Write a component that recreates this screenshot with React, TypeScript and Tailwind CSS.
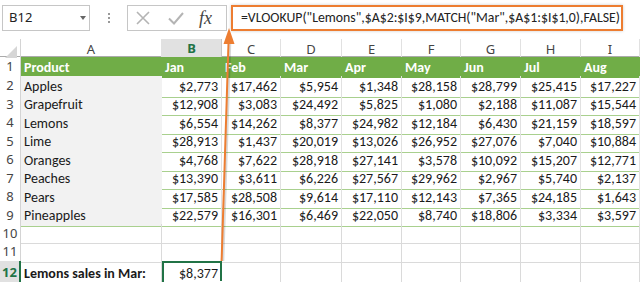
import React from "react";

const cols = ["A", "B", "C", "D", "E", "F", "G", "H", "I"];
const months = ["Jan", "Feb", "Mar", "Apr", "May", "Jun", "Jul", "Aug"];

const data: [string, string[]][] = [
  ["Apples", ["$2,773", "$17,462", "$5,954", "$1,348", "$28,158", "$28,799", "$25,415", "$17,227"]],
  ["Grapefruit", ["$12,908", "$3,083", "$24,492", "$5,825", "$1,080", "$2,188", "$11,087", "$15,544"]],
  ["Lemons", ["$6,554", "$14,262", "$8,377", "$24,982", "$12,184", "$6,430", "$21,159", "$18,597"]],
  ["Lime", ["$28,913", "$1,437", "$20,019", "$13,026", "$26,952", "$27,076", "$7,040", "$10,884"]],
  ["Oranges", ["$4,768", "$7,622", "$28,918", "$27,141", "$3,578", "$10,092", "$15,207", "$12,771"]],
  ["Peaches", ["$13,390", "$3,611", "$6,226", "$27,567", "$29,962", "$2,967", "$5,740", "$2,137"]],
  ["Pears", ["$17,585", "$28,508", "$9,614", "$17,110", "$12,143", "$7,365", "$24,185", "$1,643"]],
  ["Pineapples", ["$22,579", "$16,301", "$6,469", "$22,050", "$8,740", "$18,806", "$3,334", "$3,597"]],
];

const grid =
  "grid grid-cols-[21px_141px_60px_59px_61px_60px_59px_60px_60px_59px]";

function RowNum({ n }: { n: number }) {
  return (
    <div className="flex items-center justify-center border-r border-b border-[#d4d4d4] bg-white text-[13px] text-[#444] font-['Segoe_UI','Noto_Sans',sans-serif]">
      {n}
    </div>
  );
}

export default function App() {
  return (
    <div className="relative w-[640px] h-[282px] overflow-hidden bg-white font-['Carlito','Lato',sans-serif] text-[14px] text-[#1a1a1a]">
      {/* formula bar */}
      <div className="flex h-[39px] items-start pt-[5px] pl-[2px]">
        <div className="flex h-[26px] w-[88px] items-center justify-between border border-[#c6c6c6] pl-[6px] pr-[3px] text-[13px] text-[#222] font-['Segoe_UI','Noto_Sans',sans-serif]">
          <span>B12</span>
          <span className="h-0 w-0 border-x-[3.5px] border-t-[4px] border-x-transparent border-t-[#666]" />
        </div>
        <div className="flex h-[26px] w-[37px] flex-col items-center justify-center gap-[2px]">
          <span className="h-[2px] w-[2px] bg-[#999]" />
          <span className="h-[2px] w-[2px] bg-[#999]" />
          <span className="h-[2px] w-[2px] bg-[#999]" />
        </div>
        <div className="flex h-[26px] w-[100px] items-center border border-[#c6c6c6] pl-[6px]">
          <svg width="16" height="16" viewBox="0 0 16 16" className="ml-[1px]">
            <path d="M2 2 L14 14 M14 2 L2 14" stroke="#b4b4b4" strokeWidth="1.6" fill="none" />
          </svg>
          <svg width="18" height="16" viewBox="0 0 18 16" className="ml-[16px]">
            <path d="M2 8.5 L7 13.5 L16 3" stroke="#b4b4b4" strokeWidth="2" fill="none" />
          </svg>
          <span className="ml-[14px] font-['Liberation_Serif',serif] text-[18px] italic text-[#444]">
            fx
          </span>
        </div>
        <div className="ml-[4px] flex h-[26px] w-[392px] items-center border-2 border-[#ed7d31] pl-[8px] text-[13.8px] text-[#222] shadow-[0_0_3px_rgba(0,0,0,0.2)]">
          =VLOOKUP("Lemons",$A$2:$I$9,MATCH("Mar",$A$1:$I$1,0),FALSE)
        </div>
      </div>

      {/* column headers */}
      <div className={`${grid} h-[18px] border-b border-[#ababab] font-['Segoe_UI','Noto_Sans',sans-serif] text-[13px] text-[#444]`}>
        <div className="relative border-r border-[#d4d4d4]">
          <span className="absolute bottom-[3px] right-[3px] h-0 w-0 border-b-[12px] border-l-[12px] border-b-[#d6d6d6] border-l-transparent" />
        </div>
        {cols.map((c) => (
          <div
            key={c}
            className={
              c === "B"
                ? "flex items-center justify-center border-r border-b-2 border-r-[#c6c6c6] border-b-[#217346] bg-[#e1e1e1] font-bold text-[#217346]"
                : "flex items-center justify-center border-r border-[#e1e1e1]"
            }
          >
            {c}
          </div>
        ))}
      </div>

      {/* row 1 */}
      <div className={`${grid} h-[18.5px]`}>
        <RowNum n={1} />
        <div className="flex items-center bg-[#70ad47] pl-[3px] font-bold text-white">Product</div>
        {months.map((m) => (
          <div key={m} className="flex items-center bg-[#70ad47] pl-[3px] font-bold text-white">
            {m}
          </div>
        ))}
      </div>

      {data.map(([name, vals], i) => (
        <div key={name} className={`${grid} h-[18.5px]`}>
          <RowNum n={i + 2} />
          <div className="flex items-center border-b border-[#a9d08e] bg-[#f2f2f2] pl-[3px]">{name}</div>
          {vals.map((v, j) => (
            <div
              key={j}
              className="flex items-center justify-end border-r border-b border-r-[#e1e1e1] border-b-[#a9d08e] pr-[3px]"
            >
              {v}
            </div>
          ))}
        </div>
      ))}

      {[10, 11].map((n) => (
        <div key={n} className={`${grid} h-[18.5px]`}>
          <RowNum n={n} />
          {cols.map((c) => (
            <div key={c} className="border-r border-b border-[#dadada]" />
          ))}
        </div>
      ))}

      {/* row 12 */}
      <div className={`${grid} h-[22px]`}>
        <div className="flex items-center justify-center border-r-2 border-[#217346] bg-[#e1e1e1] font-['Segoe_UI','Noto_Sans',sans-serif] text-[13px] font-bold text-[#217346]">
          12
        </div>
        <div className="flex items-center border-r border-[#dadada] pl-[3px] font-bold">Lemons sales in Mar:</div>
        <div className="relative flex items-center justify-end border-2 border-[#217346] pr-[2px]">
          $8,377
          <span className="absolute -bottom-[3px] -right-[4px] h-[6px] w-[6px] border border-white bg-[#217346]" />
        </div>
        {cols.slice(2).map((c) => (
          <div key={c} className="border-r border-[#dadada]" />
        ))}
      </div>

      {/* arrow */}
      <svg className="pointer-events-none absolute left-0 top-0" width="640" height="282">
        <line x1="222.8" y1="261" x2="229.8" y2="42" stroke="rgba(0,0,0,0.15)" strokeWidth="3" />
        <line x1="221.6" y1="261" x2="228.6" y2="40" stroke="#ed7d31" strokeWidth="2" />
        <polygon points="229,28 223.5,44 234.5,44" fill="#ed7d31" />
      </svg>
    </div>
  );
}
